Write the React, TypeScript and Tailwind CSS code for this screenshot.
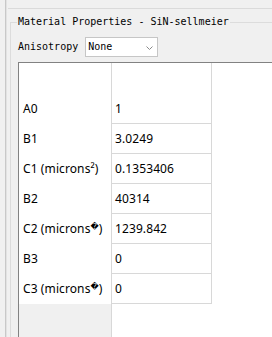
const rows: [React.ReactNode, string][] = [
  ['A0', '1'],
  ['B1', '3.0249'],
  ['C1 (microns²)', '0.1353406'],
  ['B2', '40314'],
  [
    <>
      C2 (microns<span className="font-['DejaVu_Sans',sans-serif] text-[8px] relative -top-[2px]">�</span>)
    </>,
    '1239.842',
  ],
  ['B3', '0'],
  [
    <>
      C3 (microns<span className="font-['DejaVu_Sans',sans-serif] text-[8px] relative -top-[2px]">�</span>)
    </>,
    '0',
  ],
];

const mono = "font-['DejaVu_Sans_Mono',monospace] text-[10px] leading-[12px] text-black";

export default function App() {
  return (
    <div className="w-[272px] h-[337px] overflow-hidden bg-[#f0f0f0] flex">
      <div className="w-[5px] shrink-0" />
      <div className="w-[2px] shrink-0 border-l border-[#c8c8c8] bg-[#e2e2e2]" />
      <div className="flex-1 min-w-0 flex flex-col">
        <div className="h-[9px] ml-[1px] border-b border-[#dadada] shrink-0" />

        {/* group box */}
        <div className="relative mt-[13px] ml-[3px] flex-1 flex flex-col border-l border-t border-[#dcdcdc]">
          <span className={`absolute left-[6px] -top-[7px] px-[1px] bg-[#f0f0f0] whitespace-nowrap ${mono}`}>
            Material Properties - SiN-sellmeier
          </span>

          <div className="mt-[14px] pl-[7px] flex items-center gap-[7px] shrink-0">
            <span className={mono}>Anisotropy</span>
            <div className="w-[73px] h-[20px] border border-[#c6c6c6] bg-white flex items-center justify-between pl-[2px] pr-[4px]">
              <span className={mono}>None</span>
              <svg width="7" height="4" viewBox="0 0 7 4" className="mt-[1px]">
                <polyline points="0.5,0.5 3.5,3.5 6.5,0.5" fill="none" stroke="#8a8a8a" strokeWidth="1" />
              </svg>
            </div>
          </div>

          {/* table */}
          <div className="mt-[5px] ml-[7px] flex-1 flex border-l border-t border-[#828282] bg-white font-['Noto_Sans',sans-serif] text-[12px] tracking-[0.1px] text-black">
            <div className="w-[93px] shrink-0 flex flex-col border-r border-[#d8d8d8]">
              <div className="h-[31px] bg-white" />
              {rows.map(([label], i) => (
                <div key={i} className="h-[30px] bg-white flex items-center pl-[4px] whitespace-nowrap">
                  {label}
                </div>
              ))}
              <div className="flex-1 bg-[#f0f0f0]" />
            </div>
            <div className="w-[100px] shrink-0">
              <div className="border-r border-[#d8d8d8]">
                <div className="h-[31px]" />
                {rows.map(([, value], i) => (
                  <div key={i} className="h-[30px] border-b border-[#d8d8d8] flex items-center pl-[3px]">
                    {value}
                  </div>
                ))}
              </div>
            </div>
            <div className="flex-1" />
          </div>
        </div>
      </div>
    </div>
  );
}
